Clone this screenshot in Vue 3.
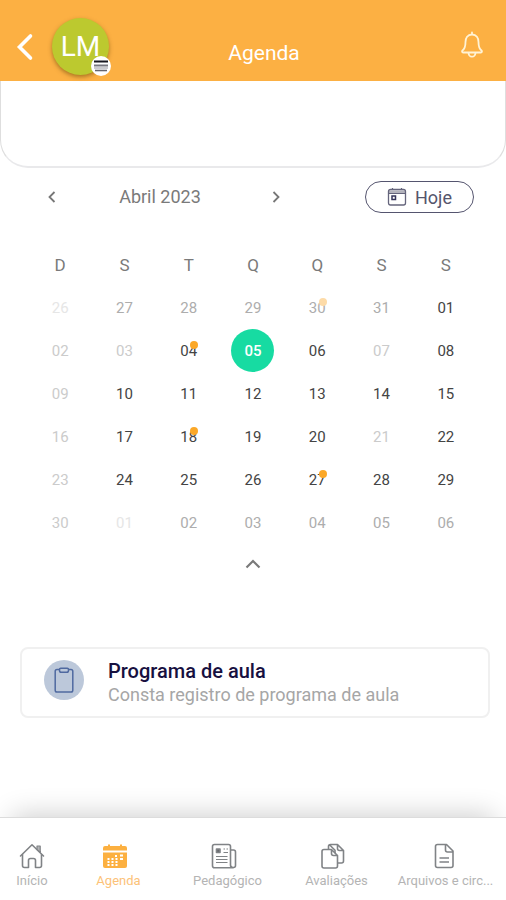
<script setup>
import { ref } from 'vue'

const weekdays = ['D', 'S', 'T', 'Q', 'Q', 'S', 'S']

// tones: f = faintest, l = light, m = medium, d = dark
const rows = [
  ['26f', '27m', '28m', '29m', '30m', '31m', '01d'],
  ['02l', '03l', '04d', '05d', '06d', '07l', '08d'],
  ['09l', '10d', '11d', '12d', '13d', '14d', '15d'],
  ['16l', '17d', '18d', '19d', '20d', '21l', '22d'],
  ['23l', '24d', '25d', '26d', '27d', '28d', '29d'],
  ['30l', '01f', '02m', '03m', '04m', '05m', '06m'],
]
const tones = { f: 'faint', l: 'light', m: 'medium', d: 'dark' }
const marks = { '0-4': 'past', '1-2': 'on', '3-2': 'on', '4-4': 'on' }

const weeks = rows.map((row, r) =>
  row.map((cell, c) => ({
    id: `${r}-${c}`,
    label: cell.slice(0, 2),
    tone: tones[cell[2]],
    mark: marks[`${r}-${c}`],
  })),
)
const selected = ref('1-3')

const tabs = [
  { id: 'home', label: 'Início' },
  { id: 'agenda', label: 'Agenda' },
  { id: 'news', label: 'Pedagógico' },
  { id: 'copies', label: 'Avaliações' },
  { id: 'file', label: 'Arquivos e circ...' },
]
const active = ref('agenda')
</script>

<template>
  <div class="screen">
    <header class="topbar">
      <div class="left">
        <button class="back" aria-label="Voltar">
          <svg width="18" height="28" viewBox="0 0 18 28"><path d="M14.500 3 3.500 14l11 11" fill="none" stroke="#fff" stroke-width="3.600" stroke-linecap="round" /></svg>
        </button>
        <button class="avatar" aria-label="Perfil">
          <span>LM</span>
          <svg class="badge" width="20" height="20" viewBox="0 0 20 20">
            <circle cx="10" cy="10" r="10" fill="#fff" />
            <path d="M3 5.500h14" stroke="#17171f" stroke-width="2" />
            <path d="M3 9.500h14" stroke="#77777f" stroke-width="2" />
            <path d="M3 12h14" stroke="#b9b9be" stroke-width="1.500" />
            <path d="M4 14.500h12" stroke="#66666e" stroke-width="1.600" />
          </svg>
        </button>
      </div>
      <h1>Agenda</h1>
      <button class="bell" aria-label="Notificações">
        <svg width="24" height="28" viewBox="0 0 24 28" fill="none" stroke="#fff3d6" stroke-width="1.800" stroke-linejoin="round" stroke-linecap="round">
          <path d="M12 1.500v2M12 3.500c-4.500 0-6.500 3.500-6.500 7.500 0 5-1 7-3 8.500-.8.700-.5 2 .6 2h17.800c1.100 0 1.400-1.300.6-2-2-1.500-3-3.500-3-8.500 0-4-2-7.500-6.500-7.500z" />
          <path d="M8.500 22c.3 2.600 1.700 3.700 3.500 3.700s3.200-1.100 3.500-3.700" />
        </svg>
      </button>
    </header>

    <div class="panel"></div>

    <main>
      <div class="monthbar">
        <div class="month">
          <button class="step" aria-label="Mês anterior">
            <svg width="10" height="14" viewBox="0 0 10 14"><path d="M7.500 2 2.500 7l5 5" fill="none" stroke="#777" stroke-width="1.800" /></svg>
          </button>
          <h2>Abril 2023</h2>
          <button class="step" aria-label="Próximo mês">
            <svg width="10" height="14" viewBox="0 0 10 14"><path d="m2.500 2 5 5-5 5" fill="none" stroke="#777" stroke-width="1.800" /></svg>
          </button>
        </div>
        <button class="today">
          <svg width="20" height="20" viewBox="0 0 20 20" fill="none">
            <path d="M1.500 3.500h17v3h-17z" fill="#b4b4bd" />
            <path d="M3.500 2.500h13q2 0 2 2v11.500q0 2-2 2h-13q-2 0-2-2V4.500q0-2 2-2z" stroke="#65657c" stroke-width="1.300" />
            <path d="M1.500 6.500h17M5.500 1v2M14.500 1v2" stroke="#65657c" stroke-width="1.200" />
            <rect x="5" y="9" width="3.500" height="3.500" stroke="#35355a" stroke-width="1.500" />
          </svg>
          <span>Hoje</span>
        </button>
      </div>

      <table class="calendar">
        <thead>
          <tr><th v-for="(d, i) in weekdays" :key="i" scope="col">{{ d }}</th></tr>
        </thead>
        <tbody>
          <tr v-for="(week, r) in weeks" :key="r">
            <td v-for="day in week" :key="day.id">
              <button
                class="day"
                :class="[day.tone, { selected: selected === day.id }]"
                @click="selected = day.id"
              >
                {{ day.label }}<i v-if="day.mark" class="dot" :class="day.mark"></i>
              </button>
            </td>
          </tr>
        </tbody>
      </table>

      <button class="collapse" aria-label="Recolher calendário">
        <svg width="18" height="12" viewBox="0 0 18 12"><path d="m2.500 9.500 6.500-6.500 6.500 6.500" fill="none" stroke="#7a7a7a" stroke-width="2.200" /></svg>
      </button>

      <a class="card" href="#programa">
        <span class="disc">
          <svg width="20" height="26" viewBox="0 0 20 26" fill="none" stroke="#4f69a0" stroke-width="1.500" stroke-linejoin="round">
            <path d="M5.500 2.500H3q-1.800 0-1.800 1.800v18.900q0 1.800 1.800 1.800h14q1.800 0 1.800-1.800V4.300q0-1.800-1.800-1.800h-2.500" />
            <path d="M5.500 2.500q0-1.200 1.200-1.200h6.600q1.200 0 1.200 1.200v1q0 1.800-1.800 1.800H7.300q-1.800 0-1.800-1.800z" />
          </svg>
        </span>
        <span class="copy">
          <strong>Programa de aula</strong>
          <span>Consta registro de programa de aula</span>
        </span>
      </a>
    </main>

    <nav class="tabs">
      <a
        v-for="tab in tabs"
        :key="tab.id"
        :href="'#' + tab.id"
        :class="{ active: active === tab.id }"
        @click="active = tab.id"
      >
        <svg v-if="tab.id === 'home'" width="26" height="26" viewBox="0 0 26 26" fill="none" stroke="#808386" stroke-width="1.600" stroke-linejoin="round" stroke-linecap="round">
          <path d="M1.500 13 13 1.800 24.500 13" />
          <path d="M18 4.500V3h3.200v6.500L18 6.500z" fill="#b4b6b8" stroke-width="1.200" />
          <path d="M3.500 11.500v11q0 2 2 2H9.500v-7q0-2 2-2h3q2 0 2 2v7h4q2 0 2-2v-11" />
        </svg>
        <svg v-else-if="tab.id === 'agenda'" class="lead" width="26" height="26" viewBox="0 0 26 26">
          <path d="M3 3h3V1.500h2V3h10V1.500h2V3h3q2 0 2 2v2.500H1V5q0-2 2-2z" fill="#fcb040" />
          <path d="M1 9.500h24V23q0 2-2 2H3q-2 0-2-2z" fill="#fcb040" />
          <path d="M13 13h2M18 12.500h3M5.500 16h2M9.500 16h2M13.500 16h2M18 16h3M5.500 19h2M9.500 19h2M13.500 19h2M5.500 22h2M9.500 22h2M13.500 22h2" stroke="#fff" stroke-width="1.800" />
        </svg>
        <svg v-else-if="tab.id === 'news'" class="lead" width="26" height="26" viewBox="0 0 26 26" fill="none" stroke="#808386" stroke-width="1.600" stroke-linejoin="round">
          <path d="M19.500 7h3q2 0 2 2v13.500q0 2-2 2t-3-2zM22 24.800H3.500q-2 0-2-2V3.500q0-2 2-2h14q2 0 2 2v18.500q0 2.500 2.500 2.800z" />
          <path d="M12.500 6h1.500M15.500 6h1.500M12.500 9.500h4.500M5 13.500h11.500M5 16.500h11.500M5 19.500h11.500" stroke-width="1.200" />
          <rect x="5.500" y="6" width="3.500" height="3.500" fill="#66696d" />
        </svg>
        <svg v-else-if="tab.id === 'copies'" class="lead" width="26" height="26" viewBox="0 0 26 26" fill="none" stroke="#808386" stroke-width="1.600" stroke-linejoin="round">
          <path d="M8.500 6V3.500q0-2 2-2h7l6 6v10.500q0 2-2 2h-3.500M17.500 1.500v4q0 2 2 2h4M9.500 1.800l5.500 5.500v3" />
          <path d="M4 6.500h7.500l6 6V23q0 2-2 2H4q-2 0-2-2V8.500q0-2 2-2zM11.500 6.500v4q0 2 2 2h4" />
        </svg>
        <svg v-else class="doc" width="26" height="26" viewBox="0 0 26 26" fill="none" stroke="#808386" stroke-width="1.600" stroke-linejoin="round">
          <path d="M6.500 1.500h9l6.500 6.500v14.500q0 2-2 2H6.500q-2 0-2-2V3.500q0-2 2-2zM14.500 1.500V7q0 2 2 2h5.500M8.500 15h9.500M8.500 19h9.500" />
        </svg>
        <span>{{ tab.label }}</span>
      </a>
    </nav>
  </div>
</template>

<style>
body {
  background: #fff;
}
</style>

<style scoped>
.screen {
  display: flex;
  flex-direction: column;
  min-height: 100vh;
  background: #fff;
  font-family: Roboto, "Liberation Sans", sans-serif;
}
button {
  margin: 0;
  padding: 0;
  border: 0;
  background: none;
  color: inherit;
  font: inherit;
  cursor: pointer;
}
svg {
  display: block;
  flex: none;
}
a {
  color: inherit;
  text-decoration: none;
}
.topbar {
  display: grid;
  grid-template-columns: 1fr auto 1fr;
  align-items: center;
  box-sizing: border-box;
  height: 81px;
  padding: 12px 22px 0 16px;
  background: #fcb043;
  color: #fff;
}
.left {
  display: flex;
  align-items: center;
  gap: 18px;
}
.avatar {
  position: relative;
  width: 57px;
  height: 57px;
  border-radius: 50%;
  background: #bcc92f;
  box-shadow: 0 2px 4px rgba(90, 60, 0, 0.5);
  font-size: 28px;
}
.badge {
  position: absolute;
  right: -2px;
  bottom: -1px;
}
h1 {
  margin: 12px 0 0 28px;
  font-size: 21px;
  line-height: 26px;
  font-weight: 400;
}
.bell {
  justify-self: end;
  padding-bottom: 4px;
}
.panel {
  box-sizing: border-box;
  height: 87px;
  border: 1px solid #dedede;
  border-top: 0;
  border-bottom: 2px solid #e9e9eb;
  border-radius: 0 0 28px 28px;
}
main {
  display: flex;
  flex-direction: column;
  flex: 1;
}
.monthbar {
  display: flex;
  justify-content: space-between;
  align-items: center;
  padding: 13px 32px 0 46px;
}
.month {
  display: flex;
  justify-content: space-between;
  align-items: center;
  width: 236px;
}
.step {
  padding: 1px;
}
h2 {
  margin: 0 8px 0 0;
  font-size: 18px;
  line-height: 22px;
  font-weight: 400;
  color: #7a7a7a;
}
.today {
  display: flex;
  align-items: center;
  justify-content: center;
  gap: 8px;
  width: 109px;
  height: 32px;
  border: 1px solid #55556f;
  border-radius: 16px;
  color: #55556c;
  font-size: 18px;
}
.calendar {
  table-layout: fixed;
  width: calc(100% - 56px);
  margin: 31px 28px 0;
  border-collapse: collapse;
}
th {
  height: 42px;
  padding: 0;
  font-size: 17px;
  font-weight: 400;
  color: #7a7a7a;
}
td {
  height: 43px;
  padding: 0;
  text-align: center;
}
.day {
  position: relative;
  width: 43px;
  height: 43px;
  border-radius: 50%;
  font-size: 15px;
  vertical-align: top;
}
.dark {
  color: #444;
}
.medium {
  color: #adadad;
}
.light {
  color: #cbcbcb;
}
.faint {
  color: #e6e6e6;
}
.selected {
  background: #17dba2;
  color: #fff;
  font-weight: 500;
}
.dot {
  position: absolute;
  top: 12px;
  right: 12px;
  width: 8px;
  height: 8px;
  border-radius: 50%;
  background: #fba828;
}
.dot.past {
  background: #fddba8;
}
.collapse {
  align-self: center;
  margin-top: 14px;
}
.card {
  display: flex;
  align-items: center;
  gap: 24px;
  box-sizing: border-box;
  height: 71px;
  margin: 77px 16px 0 20px;
  padding: 0 22px 6px;
  border: 2px solid #f0f0f0;
  border-radius: 8px;
}
.disc {
  display: flex;
  align-items: center;
  justify-content: center;
  flex: none;
  width: 40px;
  height: 40px;
  border-radius: 50%;
  background: #bcc8da;
}
.copy {
  display: flex;
  flex-direction: column;
  padding-top: 5px;
  color: #a6a6a6;
  font-size: 18px;
  line-height: 22px;
}
.copy strong {
  color: #17103f;
  font-size: 20px;
  line-height: 25px;
  font-weight: 500;
}
.tabs {
  display: grid;
  grid-template-columns: 64px repeat(4, minmax(0, 1fr));
  box-sizing: border-box;
  height: 83px;
  padding: 25px 6px 0 0;
  border-top: 1px solid #dcdcdc;
  background: #fff;
  box-shadow: 0 -14px 28px -12px rgba(0, 0, 0, 0.2);
}
.tabs a {
  display: flex;
  flex-direction: column;
  align-items: center;
  gap: 3px;
  min-width: 0;
  color: #b4b4b4;
  font-size: 13px;
  line-height: 18px;
  white-space: nowrap;
}
.tabs .lead {
  margin-right: 8px;
}
.tabs .doc {
  margin-right: 4px;
}
.tabs .active {
  color: #fcc278;
}
</style>
